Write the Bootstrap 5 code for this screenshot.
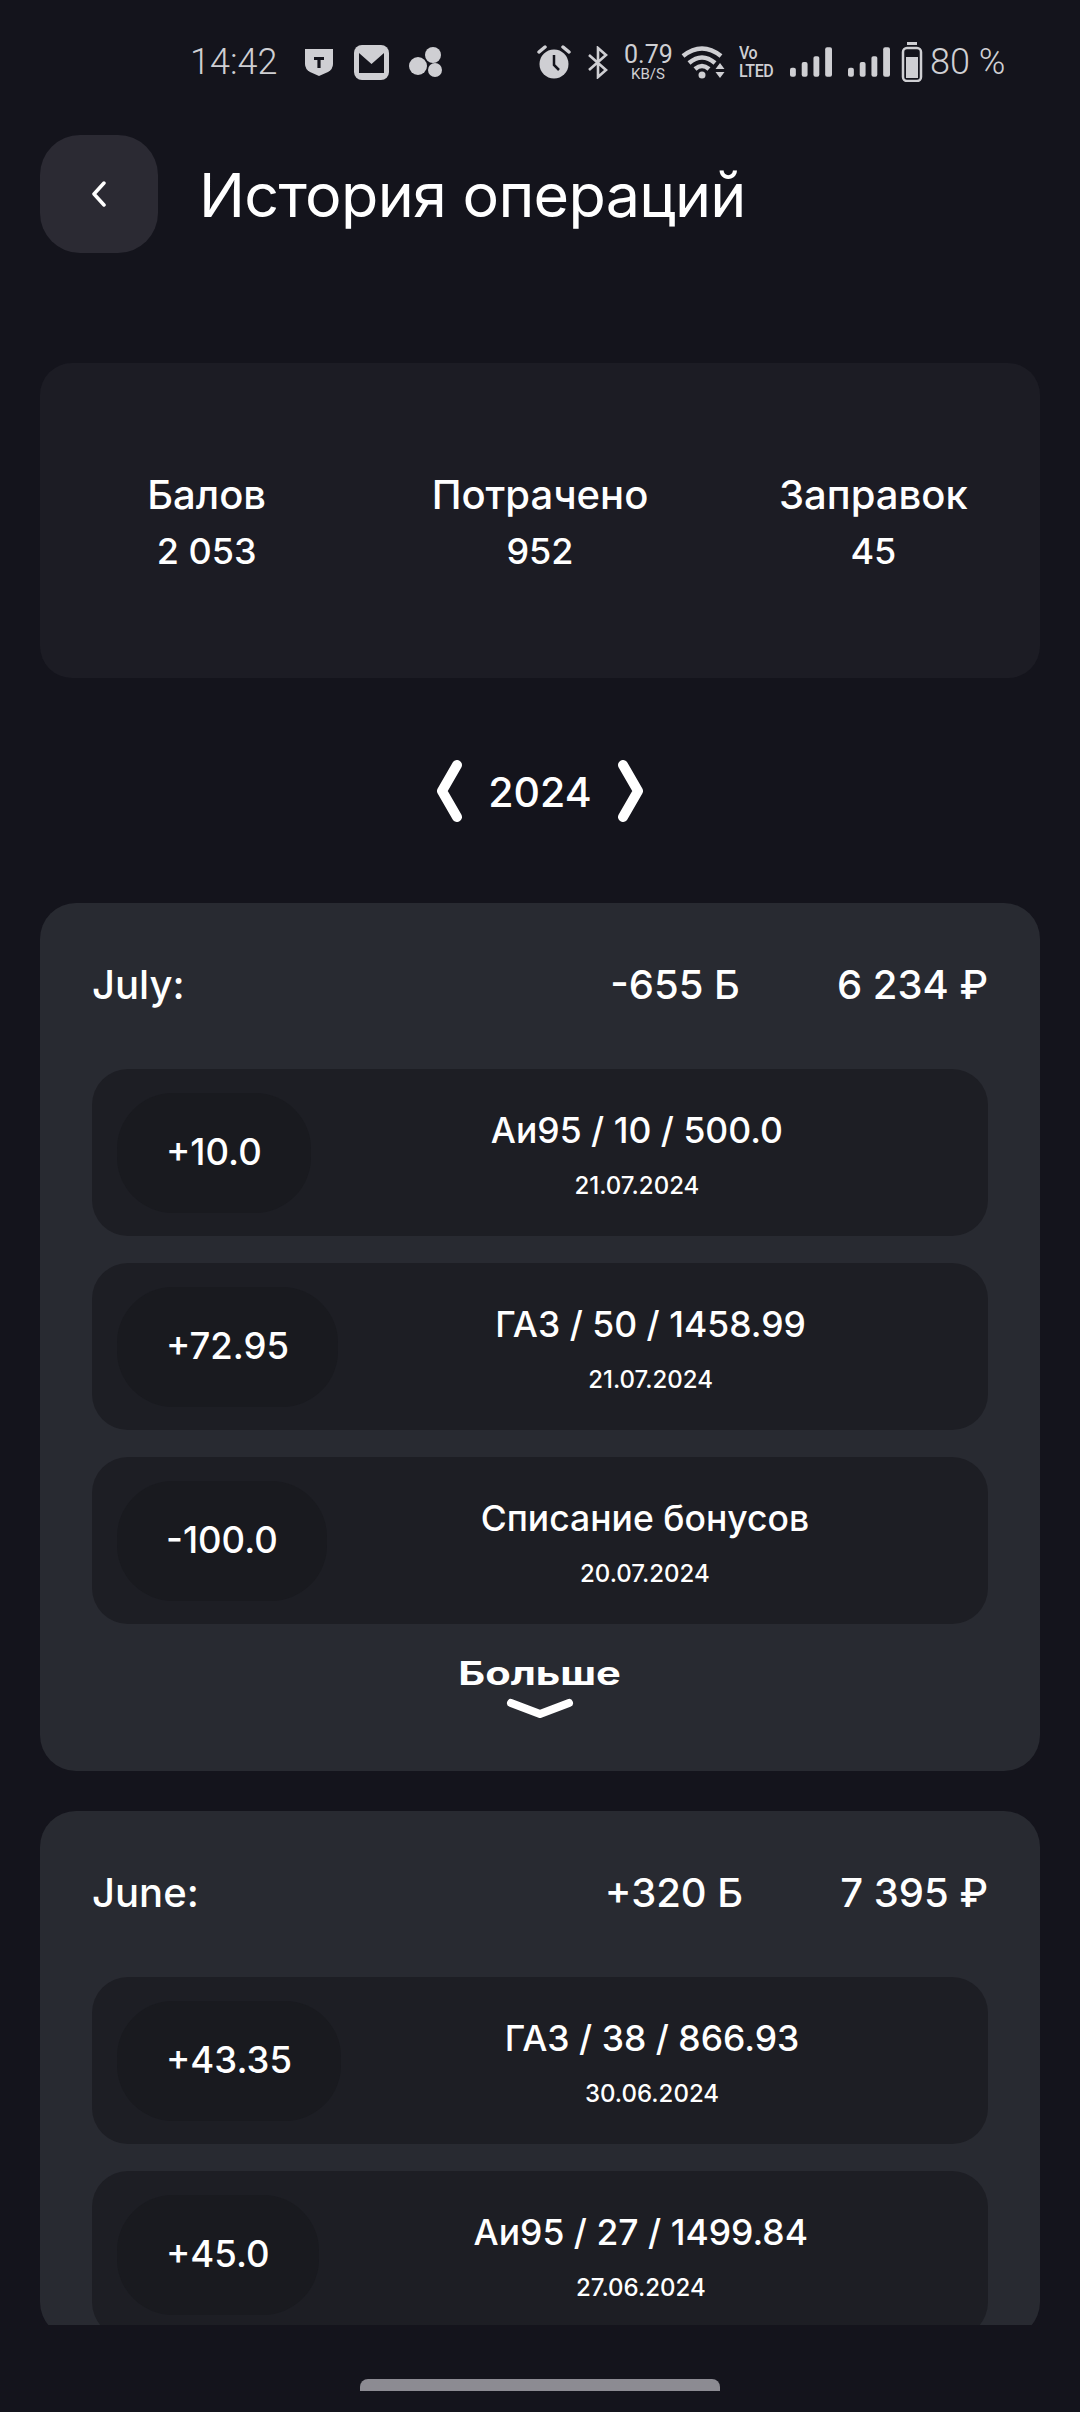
<!DOCTYPE html>
<html lang="ru">
<head>
    <meta charset="UTF-8">
    <meta name="viewport" content="width=device-width, initial-scale=1.0">
    <title>История операций</title>
    <link rel="stylesheet" href="https://cdn.jsdelivr.net/npm/bootstrap@5.3.0/dist/css/bootstrap.min.css">
    <style>
        html, body { background: #14141c; }
        body { height: 2412px; overflow: hidden; font-family: Inter, "Liberation Sans", sans-serif; font-weight: 450; color: #fff; }
        .status-bar { height: 135px; padding: 42px 0 0 190px; color: #cfcfd3; font-family: Roboto, sans-serif; font-weight: 300; font-size: 36px; }
        .status-bar svg { display: block; flex: none; }
        .status-left { height: 40px; width: 340px; gap: 19px; }
        .status-right { height: 40px; margin-left: 7px; }
        .net-speed { width: 48px; margin: 0 9px 0 15px; font-weight: 400; text-align: center; }
        .net-speed b { display: block; font-weight: 400; font-size: 25px; line-height: 24px; }
        .net-speed i { display: block; font-style: normal; font-size: 15px; line-height: 14px; }
        .volte { font-size: 16px; font-weight: 500; line-height: 16px; letter-spacing: -0.4px; width: 36px; margin: 0 15px 0 12px; transform: scaleY(1.15); }
        .signal-next { margin-left: 16px; }
        .battery-icon { margin-left: 11px; }
        .battery-text { margin-left: 7px; }
        .top-head { height: 228px; padding-left: 40px; align-items: flex-start; }
        .back-btn { width: 118px; height: 118px; border-radius: 40px; background: #2b2a33; border: 0; padding: 0; }
        .page-title { font-size: 61px; line-height: 121px; font-weight: 400; margin: 0 0 0 41px; letter-spacing: -0.7px; }
        .scroll-area { height: 1962px; overflow: hidden; padding: 0 40px; }
        .summary-box { height: 315px; background: #1c1c24; border-radius: 32px; padding-top: 104px; --bs-gutter-x: 0; margin: 0; }
        .sum-label { font-size: 40px; line-height: 56px; }
        .sum-val { font-size: 36px; line-height: 56px; }
        .year-nav { height: 225px; gap: 24px; }
        .year-nav span { font-size: 41px; padding-top: 5px; }
        .month-box { background: #282a31; border-radius: 36px; padding: 52px 52px 0; margin-bottom: 40px; }
        .month-head { height: 60px; margin-bottom: 54px; font-size: 40px; line-height: 60px; }
        .month-sum { gap: 97px; }
        .op-row { height: 167px; background: #1d1e24; border-radius: 36px; padding: 0 25px; margin-bottom: 27px; }
        .op-pill { height: 120px; padding: 0 49px; border-radius: 56px; background: #191a1f; font-size: 36.5px; flex: none; }
        .op-text { padding-top: 4px; }
        .op-main { font-size: 35.5px; line-height: 44px; }
        .op-date { font-size: 24px; line-height: 30px; margin-top: 18px; }
        .more-box { height: 120px; padding-top: 5px; }
        .more-text { font-size: 32px; font-weight: 700; line-height: 36px; transform: scaleX(1.3); display: inline-block; }
        .more-arrow { margin-top: 5px; }
        .home-bar { width: 360px; height: 12px; margin: 54px auto 0; background: #8c8b92; border-radius: 8px 8px 0 0; }
    </style>
</head>
<body>
    <div class="status-bar d-flex align-items-start">
        <div class="status-left d-flex align-items-center">
            <span class="me-2">14:42</span>
            <svg width="30" height="30" viewBox="0 0 30 30"><path d="M1 2h28v15q0 5-5 8l-9 4-9-4q-5-3-5-8z" fill="#cfcfd3"/><path d="M10 10h10v3h-3.400v8h-3.200v-8H10z" fill="#14141c"/></svg>
            <svg width="37" height="37" viewBox="0 0 37 37"><rect x="1" y="1" width="35" height="35" rx="8" fill="#cfcfd3"/><path d="M6 9l12.500 11L31 9v20H6z" fill="#14141c"/><path d="M9 7h19l-9.500 9z" fill="#cfcfd3"/></svg>
            <svg width="35" height="30" viewBox="0 0 35 30"><circle cx="24" cy="8" r="8" fill="#cfcfd3"/><circle cx="9" cy="19" r="9" fill="#cfcfd3"/><circle cx="26" cy="23" r="7" fill="#cfcfd3"/></svg>
        </div>
        <div class="status-right d-flex align-items-center">
            <svg width="34" height="36" viewBox="0 0 34 36"><circle cx="17" cy="20" r="14.500" fill="#cfcfd3"/><path d="M17 11v10l5 5" fill="none" stroke="#14141c" stroke-width="2.500"/><path d="M2 8l6-5M32 8l-6-5" stroke="#cfcfd3" stroke-width="3.500" stroke-linecap="round"/></svg>
            <svg class="ms-3" width="22" height="33" viewBox="0 0 22 33"><path d="M2 9l17 15-8 7V2l8 7L2 24" fill="none" stroke="#cfcfd3" stroke-width="2.600"/></svg>
            <div class="net-speed"><b>0.79</b><i>KB/S</i></div>
            <svg width="46" height="34" viewBox="0 0 46 34"><path d="M2 11q19-15 38 0M8 18q13-11 26 0M14 24q7-6 14 0" fill="none" stroke="#cfcfd3" stroke-width="4.500"/><circle cx="21" cy="30" r="3.500" fill="#cfcfd3"/><path d="M39 18l4.500 6h-9zM39 33l4.500-6h-9z" fill="#cfcfd3"/></svg>
            <div class="volte"><div>Vo</div><div>LTED</div></div>
            <svg width="42" height="30" viewBox="0 0 43 30"><rect x="0" y="21" width="6" height="9" rx="2" fill="#cfcfd3"/><rect x="12" y="15" width="6" height="15" rx="2" fill="#cfcfd3"/><rect x="24" y="9" width="6" height="21" rx="2" fill="#cfcfd3"/><rect x="36" y="0" width="7" height="30" rx="2" fill="#cfcfd3"/></svg>
            <svg class="signal-next" width="42" height="30" viewBox="0 0 43 30"><rect x="0" y="21" width="6" height="9" rx="2" fill="#cfcfd3"/><rect x="12" y="15" width="6" height="15" rx="2" fill="#cfcfd3"/><rect x="24" y="9" width="6" height="21" rx="2" fill="#cfcfd3"/><rect x="36" y="0" width="7" height="30" rx="2" fill="#cfcfd3"/></svg>
            <svg class="battery-icon" width="22" height="40" viewBox="0 0 22 40"><rect x="6" y="0" width="10" height="3" fill="#cfcfd3"/><rect x="2" y="6" width="18" height="33" rx="4" fill="none" stroke="#cfcfd3" stroke-width="2.500"/><rect x="5" y="15" width="12" height="21" fill="#cfcfd3"/></svg>
            <span class="battery-text">80 %</span>
        </div>
    </div>

    <div class="top-head d-flex">
        <button class="back-btn d-flex align-items-center justify-content-center" type="button">
            <svg width="16" height="26" viewBox="0 0 16 26"><path d="M13 2L3 13l10 11" fill="none" stroke="#fff" stroke-width="3.500" stroke-linecap="round" stroke-linejoin="round"/></svg>
        </button>
        <h1 class="page-title">История операций</h1>
    </div>

    <div class="scroll-area">
        <div class="summary-box row text-center">
            <div class="col-4"><div class="sum-label">Балов</div><div class="sum-val">2 053</div></div>
            <div class="col-4"><div class="sum-label">Потрачено</div><div class="sum-val">952</div></div>
            <div class="col-4"><div class="sum-label">Заправок</div><div class="sum-val">45</div></div>
        </div>

        <div class="year-nav d-flex align-items-center justify-content-center">
            <svg width="28" height="62" viewBox="0 0 28 62"><path d="M21 5L6 31l15 26" fill="none" stroke="#fff" stroke-width="10" stroke-linecap="round" stroke-linejoin="round"/></svg>
            <span>2024</span>
            <svg width="28" height="62" viewBox="0 0 28 62"><path d="M7 5l15 26L7 57" fill="none" stroke="#fff" stroke-width="10" stroke-linecap="round" stroke-linejoin="round"/></svg>
        </div>

        <div class="month-box">
            <div class="month-head d-flex justify-content-between">
                <span>July:</span>
                <div class="month-sum d-flex"><span>-655 Б</span><span>6 234 ₽</span></div>
            </div>
            <div class="op-row d-flex align-items-center">
                <div class="op-pill d-flex align-items-center">+10.0</div>
                <div class="op-text flex-grow-1 text-center"><div class="op-main">Аи95 / 10 / 500.0</div><div class="op-date">21.07.2024</div></div>
            </div>
            <div class="op-row d-flex align-items-center">
                <div class="op-pill d-flex align-items-center">+72.95</div>
                <div class="op-text flex-grow-1 text-center"><div class="op-main">ГАЗ / 50 / 1458.99</div><div class="op-date">21.07.2024</div></div>
            </div>
            <div class="op-row d-flex align-items-center">
                <div class="op-pill d-flex align-items-center">-100.0</div>
                <div class="op-text flex-grow-1 text-center"><div class="op-main">Списание бонусов</div><div class="op-date">20.07.2024</div></div>
            </div>
            <div class="more-box text-center">
                <span class="more-text">Больше</span>
                <svg class="more-arrow d-block mx-auto" width="70" height="24" viewBox="0 0 70 24"><path d="M6 6l29 11L64 6" fill="none" stroke="#fff" stroke-width="8" stroke-linecap="round" stroke-linejoin="round"/></svg>
            </div>
        </div>

        <div class="month-box">
            <div class="month-head d-flex justify-content-between">
                <span>June:</span>
                <div class="month-sum d-flex"><span>+320 Б</span><span>7 395 ₽</span></div>
            </div>
            <div class="op-row d-flex align-items-center">
                <div class="op-pill d-flex align-items-center">+43.35</div>
                <div class="op-text flex-grow-1 text-center"><div class="op-main">ГАЗ / 38 / 866.93</div><div class="op-date">30.06.2024</div></div>
            </div>
            <div class="op-row d-flex align-items-center">
                <div class="op-pill d-flex align-items-center">+45.0</div>
                <div class="op-text flex-grow-1 text-center"><div class="op-main">Аи95 / 27 / 1499.84</div><div class="op-date">27.06.2024</div></div>
            </div>
        </div>
    </div>
    <div class="home-bar"></div>
    <script src="https://cdn.jsdelivr.net/npm/bootstrap@5.3.0/dist/js/bootstrap.bundle.min.js"></script>
</body>
</html>
